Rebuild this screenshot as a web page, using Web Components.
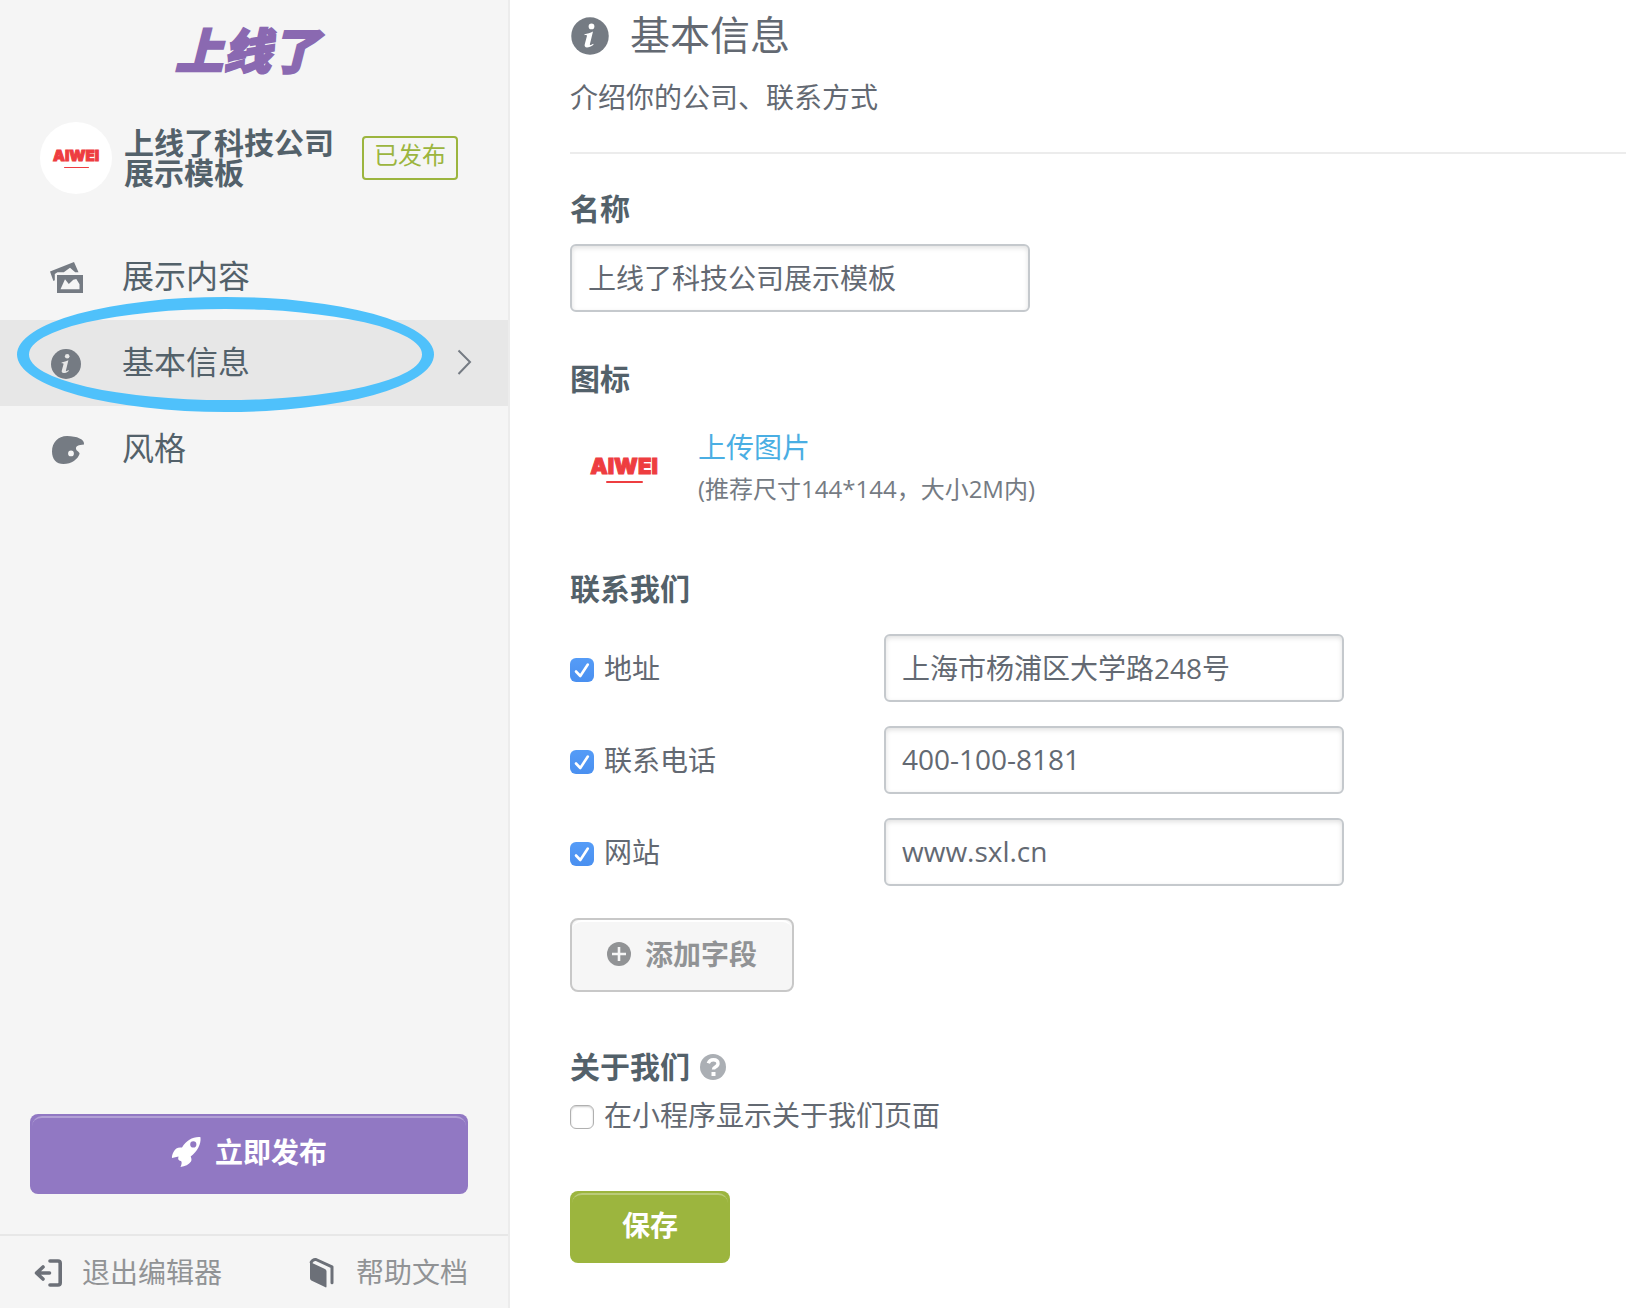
<!DOCTYPE html>
<html lang="zh-CN">
<head>
<meta charset="utf-8">
<title>基本信息</title>
<style>
  html { font-family: "Open Sans", "Noto Sans CJK SC", sans-serif; font-size: 28px; line-height: 42px; color: #636972; background: #fff; }
  body { margin: 0; }
</style>
</head>
<body>
<editor-app></editor-app>
<script>
const define = (name, html, setup) => {
  const template = document.createElement('template');
  template.innerHTML = `<style>*, *::before { box-sizing: border-box; }</style>${html}`;
  customElements.define(name, class extends HTMLElement {
    constructor() {
      super();
      this.attachShadow({ mode: 'open' }).append(template.content.cloneNode(true));
    }
    connectedCallback() { if (setup) setup(this, this.shadowRoot); }
  });
};

const icons = {
  images: '<path d="M0 9.500 24 0 28.500 10.200H25.200L20 5.800 13.800 10.200H7.500L4.800 12V18.200L3.400 19z"/><path fill-rule="evenodd" d="M7 13h26v18H7zm3.500 14.200h19v-5l-3.200-5.200-3 .8-4.500 4.200-3.800-4.800z"/>',
  info: '<circle cx="16" cy="16" r="15"/><g fill="var(--hole,#fff)"><circle cx="17.200" cy="8.300" r="2.300"/><path d="M11.600 14.500c2.400-.4 4.600-1.200 6.800-2.200l-2.500 10.200c-.2.900.5.900 2.700-.4l.2.800c-2 1.500-3.600 2.200-5.200 2.200-1.600 0-2.200-.9-1.800-2.500l1.700-6.400c.2-.8-.4-1-1.900-.9z"/></g>',
  palette: '<path fill-rule="evenodd" d="M17 2C8 2 2 8.600 2 17.500 2 25.500 6.500 30 13.500 30 21.500 30 28 25 29.500 20c.6-2-3-2.500-3.500-5.200C25.700 12 28.500 10.800 34 10.500 35 5.500 27 2 17 2zm4 14.500a2.900 2.900 0 1 1 0 5.800 2.900 2.900 0 0 1 0-5.800z"/>',
  rocket: '<path fill-rule="evenodd" d="M29.500 1.200C22 .5 15.500 4.500 11 11.500 7 11 4.500 12 2.500 16 1.200 18.500.7 20.500 1 22l6.500-1.500c-.3 1.500-.5 2.500 0 3.200.8.8 1.700 1.200 2.500 1.300 1.200 1.200.6 3.500-.5 6C14 30.500 18 28.500 20 25.500c1-1.700.3-3.200-.3-5C26.500 15 30.200 8.500 29.500 1.200zM22.300 5.300a3.100 3.100 0 1 1 0 6.200 3.100 3.100 0 0 1 0-6.200z"/>',
  exit: '<g fill="none" stroke="currentColor" stroke-width="3.600" stroke-linecap="round" stroke-linejoin="round"><path d="M16 2h8q2.200 0 2.200 2.200v19.600q0 2.200-2.200 2.200h-8M15.500 14H2.500M9 8l-6.500 6L9 20"/></g>',
  book: '<path d="M2 4 17 11q1.500.8 1.500 2.200v15.300q0 1.400-1.500.6L3.300 22.400Q2 21.700 2 20.200z"/><path fill="none" stroke="currentColor" stroke-width="3" stroke-linejoin="round" stroke-linecap="round" d="M3.200 4.200Q5 1 8 1.500L24 8.800v16"/>',
  plus: '<circle cx="12" cy="12" r="12"/><path d="M12 5v14M5 12h14" stroke="#f6f6f6" stroke-width="2.600" fill="none"/>',
  help: '<circle cx="13" cy="13" r="13"/><path d="M8.300 9.300Q9.500 5.700 13.300 5.700 18 5.700 18 9.500q0 2-2.600 3.500Q13.500 14 13.500 15.500" stroke="#fff" stroke-width="3.400" fill="none"/><path d="M11.500 18h4v4h-4z" fill="#fff"/>',
  chevron: '<path d="M1.500 1.500 13 13 1.500 25" fill="none" stroke="currentColor" stroke-width="2"/>'
};
const boxes = { rocket: '0 0 30 32', exit: '0 0 28 28', book: '0 0 28 31', plus: '0 0 24 24', help: '0 0 26 26', chevron: '0 0 14 26' };

define('ui-icon', `
<style>
  :host { display: inline-flex; flex: none; width: 32px; height: 32px; }
  svg { width: 100%; height: 100%; overflow: visible; fill: currentColor; }
</style>
<svg aria-hidden="true"></svg>`, (host, root) => {
  const name = host.getAttribute('name');
  const svg = root.querySelector('svg');
  svg.setAttribute('viewBox', boxes[name] || '0 0 32 32');
  svg.innerHTML = icons[name];
});

define('company-logo', `
<style>
  :host { display: flex; flex-direction: column; align-items: center; justify-content: center; flex: none; width: 108px; height: 108px; background: #fff; color: #ee3d40; font: 900 22px/24px Inter, sans-serif; -webkit-text-stroke: 1px currentColor; }
  i { width: 37px; height: 2px; margin-top: 3px; background: currentColor; border-radius: 1px; }
  :host([small]) { width: 72px; height: 72px; border-radius: 50%; font-size: 15px; line-height: 16px; }
  :host([small]) i { width: 25px; height: 1px; }
</style>
<span>AIWEI</span><i></i>`);

define('nav-item', `
<style>
  :host { display: block; position: relative; }
  a { display: flex; align-items: center; gap: 40px; height: 86px; padding: 0 37px 2px 50px; color: #53616a; text-decoration: none; font-size: 32px; line-height: 48px; }
  a > ui-icon:first-child { margin-top: 4px; }
  a > ui-icon { color: #757b83; }
  span { flex: 1; }
  .arrow, .ring { display: none; }
  :host([active]) a { background: #e7e7e7; --hole: #e7e7e7; }
  :host([active]) .arrow { display: inline-flex; width: 14px; height: 26px; }
  :host([active]) .ring { display: block; position: absolute; left: 17px; top: -23px; width: 417px; height: 115px; border: 12px solid #4fc1fb; border-radius: 50%; pointer-events: none; }
</style>
<a href="#"><ui-icon></ui-icon><span><slot></slot></span><ui-icon class="arrow" name="chevron"></ui-icon></a>
<div class="ring"></div>`, (host, root) => {
  const icon = document.createElement('ui-icon');
  icon.setAttribute('name', host.getAttribute('icon'));
  root.querySelector('ui-icon').replaceWith(icon);
});

define('ui-button', `
<style>
  :host { display: flex; }
  button { position: relative; display: flex; flex: 0 1 auto; align-items: center; justify-content: center; gap: 14px; height: 72px; margin: 0; padding: 0 52px 4px; border: 0; border-radius: 8px; background: #9cb53e; color: #fff; font: inherit; font-weight: 700; cursor: pointer; }
  button::before { content: ""; position: absolute; inset: 2px 2px auto; height: 22px; border-radius: 10px; border-top: 2px solid rgba(255,255,255,.3); }
  :host([kind=publish]) button { flex: 1; height: 80px; background: #9178c3; }
  :host([kind=plain]) button { height: 74px; padding: 0 35px 2px; border: 2px solid #c8c8c8; background: #f6f6f6; color: #919395; }
  :host([kind=plain]) button::before { inset: 0 0 auto; border-top-color: #fff; }
</style>
<button type="button"><slot name="icon"></slot><span><slot></slot></span></button>`);

define('side-bar', `
<style>
  :host { display: flex; flex-direction: column; background: #f5f5f5; border-right: 2px solid #ececec; }
  .brand { padding: 12px 42px 20px 28px; color: #8a69b1; font: italic 900 48px/72px "Noto Sans CJK SC", sans-serif; -webkit-text-stroke: 2px currentColor; text-align: center; }
  .profile { display: flex; align-items: center; gap: 12px; padding: 18px 50px 40px 40px; }
  h2 { flex: 1; margin: 0; color: #53616a; font-size: 30px; line-height: 30px; }
  .badge { flex: none; height: 44px; padding: 0 10px; border: 2px solid #9cb53e; border-radius: 4px; color: #9cb53e; font-size: 24px; line-height: 34px; }
  nav { flex: 1; }
  ui-button { padding: 0 40px 40px 30px; }
  ui-button ui-icon { width: 30px; }
  footer { display: flex; justify-content: space-between; padding: 15px 40px 15px 34px; border-top: 2px solid #e7e7e7; }
  footer a { display: flex; align-items: center; gap: 20px; color: #919395; text-decoration: none; }
  footer ui-icon { width: 28px; height: 28px; margin-top: 2px; color: #6c7078; }
  footer .book { height: 31px; }
</style>
<div class="brand">上线了</div>
<div class="profile"><company-logo small></company-logo><h2>上线了科技公司展示模板</h2><span class="badge">已发布</span></div>
<nav>
  <nav-item icon="images">展示内容</nav-item>
  <nav-item icon="info" active>基本信息</nav-item>
  <nav-item icon="palette">风格</nav-item>
</nav>
<ui-button kind="publish"><ui-icon slot="icon" name="rocket"></ui-icon>立即发布</ui-button>
<footer>
  <a href="#"><ui-icon name="exit"></ui-icon>退出编辑器</a>
  <a href="#"><ui-icon class="book" name="book"></ui-icon>帮助文档</a>
</footer>`);

define('text-field', `
<style>
  :host { display: block; width: 460px; }
  label { display: block; margin-bottom: 12px; color: #53616a; font-size: 30px; font-weight: 700; line-height: 46px; }
  label[hidden] { display: none; }
  input { display: block; width: 100%; height: 68px; padding: 0 16px 2px; border: 2px solid #c5c9cd; border-radius: 6px; background: #fff; box-shadow: inset 0 2px 5px rgba(0,0,0,.12); color: inherit; font: inherit; outline: none; }
</style>
<label for="field"></label><input id="field" type="text">`, (host, root) => {
  const label = root.querySelector('label');
  label.textContent = host.getAttribute('label') || '';
  label.hidden = !host.hasAttribute('label');
  const input = root.querySelector('input');
  input.value = host.getAttribute('value');
  if (host.hasAttribute('name')) input.setAttribute('aria-label', host.getAttribute('name'));
});

define('check-box', `
<style>
  :host { display: block; }
  label { display: inline-flex; align-items: center; gap: 10px; }
  .box { display: grid; margin-top: 4px; }
  input, svg { grid-area: 1 / 1; width: 24px; height: 24px; margin: 0; }
  input { appearance: none; border: 1px solid #b0b0b0; border-radius: 6px; background: #fff; box-shadow: inset 0 1px 2px rgba(0,0,0,.2); }
  input:checked { border: 0; background: linear-gradient(#559cf7, #4a90f0); box-shadow: none; }
  svg { visibility: hidden; pointer-events: none; fill: none; stroke: #fff; stroke-width: 2.600; stroke-linecap: round; stroke-linejoin: round; }
  input:checked + svg { visibility: visible; }
</style>
<label><span class="box"><input type="checkbox"><svg viewBox="0 0 24 24" aria-hidden="true"><path d="M6 13.500 10.300 18 17.800 6.500"/></svg></span><slot></slot></label>`, (host, root) => {
  root.querySelector('input').checked = host.hasAttribute('checked');
});

define('contact-row', `
<style>
  :host { display: flex; align-items: center; }
  check-box { width: 314px; margin-top: 2px; }
</style>
<check-box checked></check-box><text-field></text-field>`, (host, root) => {
  const name = host.getAttribute('name');
  root.querySelector('check-box').textContent = name;
  const field = document.createElement('text-field');
  field.setAttribute('name', name);
  field.setAttribute('value', host.getAttribute('value'));
  root.querySelector('text-field').replaceWith(field);
});

define('form-section', `
<style>
  :host { display: block; }
  h3 { display: flex; align-items: center; gap: 10px; margin: 0; color: #53616a; font-size: 30px; line-height: 46px; }
</style>
<h3><slot name="title"></slot></h3><slot></slot>`);

define('info-page', `
<style>
  :host { display: block; padding: 5px 0 40px 60px; }
  header { padding-bottom: 33px; border-bottom: 2px solid #ececec; }
  h1 { display: flex; align-items: center; gap: 20px; margin: 0 0 10px; font-size: 40px; font-weight: 400; line-height: 60px; }
  h1 ui-icon { width: 40px; height: 40px; margin-top: 2px; color: #757b83; }
  p { margin: 0; line-height: 44px; }
  form { display: flex; flex-direction: column; gap: 44px; padding-top: 32px; }
  .upload { display: flex; align-items: center; gap: 20px; margin-top: 12px; }
  .upload a { color: #4aaee3; text-decoration: none; }
  .upload small { display: block; color: #757b83; font-size: 24px; }
  .rows { display: flex; flex-direction: column; gap: 24px; margin: 22px 0 32px; }
  .plus { width: 24px; height: 24px; }
  .help { width: 26px; height: 26px; color: #abafb4; }
  .about { margin: 8px 0; }
  .about check-box { margin-top: 4px; }
</style>
<header><h1><ui-icon name="info"></ui-icon>基本信息</h1><p>介绍你的公司、联系方式</p></header>
<form>
  <text-field label="名称" value="上线了科技公司展示模板"></text-field>
  <form-section><span slot="title">图标</span>
    <div class="upload"><company-logo></company-logo><div><a href="#">上传图片</a><small>(推荐尺寸144*144，大小2M内)</small></div></div>
  </form-section>
  <form-section><span slot="title">联系我们</span>
    <div class="rows">
      <contact-row name="地址" value="上海市杨浦区大学路248号"></contact-row>
      <contact-row name="联系电话" value="400-100-8181"></contact-row>
      <contact-row name="网站" value="www.sxl.cn"></contact-row>
    </div>
    <ui-button kind="plain"><ui-icon class="plus" slot="icon" name="plus"></ui-icon>添加字段</ui-button>
  </form-section>
  <form-section class="about"><span slot="title">关于我们</span><ui-icon class="help" slot="title" name="help"></ui-icon>
    <check-box>在小程序显示关于我们页面</check-box>
  </form-section>
  <ui-button>保存</ui-button>
</form>`);

define('editor-app', `
<style>
  :host { display: flex; min-height: 100vh; }
  side-bar { flex: 0 0 510px; }
  info-page { flex: 1; min-width: 0; }
</style>
<side-bar></side-bar><info-page></info-page>`);
</script>
</body>
</html>
